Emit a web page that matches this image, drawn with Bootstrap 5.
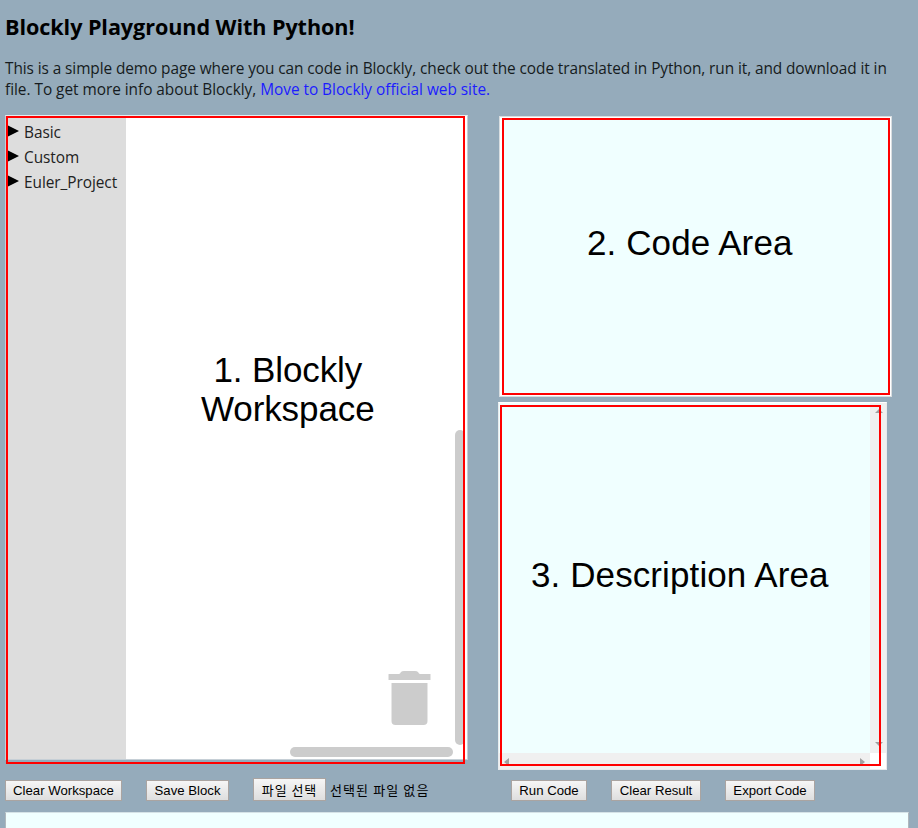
<!DOCTYPE html>
<html lang="en">
<head>
<meta charset="utf-8">
<title>Blockly Playground With Python!</title>
<link href="https://cdn.jsdelivr.net/npm/bootstrap@5.3.0/dist/css/bootstrap.min.css" rel="stylesheet">
<style>
body{background:#95abbb;color:#000;font-family:"Open Sans","Noto Sans",sans-serif;width:918px;height:828px;padding:0 5px}
.page-title{font:700 21.6px/30px "Open Sans",sans-serif;letter-spacing:-.07px;padding-top:12px;height:58px}
.intro{font-size:15.4px;line-height:21px;height:57px;letter-spacing:-.08px;color:#151b20}
.intro .second{letter-spacing:-.03px}
.intro a{color:#1c1cff}
.boards{height:655px;gap:31px}
.workspace{width:463px;height:645px;background:#fff;border:1px solid #c6cfd6;border-top-color:#e8ecef}
.toolbox{width:120px;background:#ddd;padding-top:4px;font-size:15.4px;line-height:25px;color:#222}
.toolbox li{gap:5px}
.toolbox svg{margin-bottom:3px}
.toolbox span{letter-spacing:-.05px}
.canvas-area{flex:1}
.outline{position:absolute;border:2px solid #f00;pointer-events:none}
.o-work{left:0;top:0;width:459px;height:648px}
.o-code{left:2px;top:1px;width:388px;height:277px}
.o-desc{left:1px;top:2px;width:381px;height:361px}
.caption{font:35px/39px "Liberation Sans",Arial,sans-serif;white-space:nowrap}
.c-work{position:absolute;left:195px;top:234px;letter-spacing:-.1px}
.code-box{width:393px;height:281px;margin-top:1px;background:#f0ffff;border:1px solid #d8dde0;box-shadow:inset 0 0 0 2px #fff;padding-top:106px;padding-left:87px}
.code-box .caption{letter-spacing:.1px}
.desc-box{width:389px;height:368px;margin:5px 0 0 -1px;background:#f0ffff;border:1px solid #e8ebed;border-top-color:#fff}
.desc-box .caption{padding:152px 0 0 32px;letter-spacing:.1px}
.vbar{position:absolute;right:0;top:0;width:16px;bottom:16px;background:#f0f0f0}
.hbar{position:absolute;left:0;right:16px;bottom:0;height:16px;background:#f0f0f0}
.corner{position:absolute;right:0;bottom:0;width:16px;height:16px;background:#fff}
.arrow{position:absolute;fill:#a0a0a0}
.a-up{right:3px;top:6px}
.a-down{right:3px;bottom:23px}
.a-left{left:5px;bottom:3px}
.a-right{right:21px;bottom:3px}
.vthumb,.hthumb,.trash{position:absolute;background:#ccc;border-radius:5px}
.vthumb{left:449px;top:314px;width:10px;height:315px}
.hthumb{left:284px;top:631px;width:163px;height:10px}
.trash{left:382px;top:554px;background:none;fill:#ccc}
.controls{height:42px;padding-bottom:11px}
.tool-btn{font:13.2px/16px "Liberation Sans",Arial,sans-serif;height:21px;padding:1px 0 0;border:1px solid #aaa4a1;border-radius:0;background:linear-gradient(#f6f6f6,#dedede);color:#000;white-space:nowrap}
.file-pick{font:13px/20px "Noto Sans CJK KR",sans-serif;height:23px;letter-spacing:.9px}
.file-note{font:13px/20px "Noto Sans CJK KR",sans-serif;margin:0 0 1px 4px;width:181px;white-space:nowrap;letter-spacing:1.1px}
.result{width:904px;height:16px;background:#f0ffff;border:1px solid #b0b8bd;border-bottom:0;border-top-color:#d5e2e6}
</style>
</head>
<body class="overflow-hidden">
<h1 class="page-title m-0">Blockly Playground With Python!</h1>
<p class="intro m-0 text-nowrap"><span>This is a simple demo page where you can code in Blockly, check out the code translated in Python, run it, and download it in</span><br><span class="second">file. To get more info about Blockly, <a href="#" class="text-decoration-none">Move to Blockly official web site.</a></span></p>
<main class="boards d-flex align-items-start">
 <section class="workspace position-relative d-flex flex-shrink-0">
  <ul class="toolbox list-unstyled m-0">
   <li class="d-flex align-items-center"><svg width="13" height="12"><path d="M1 0L13 6L1 12Z"/></svg><span>Basic</span></li>
   <li class="d-flex align-items-center"><svg width="13" height="12"><path d="M1 0L13 6L1 12Z"/></svg><span>Custom</span></li>
   <li class="d-flex align-items-center"><svg width="13" height="12"><path d="M1 0L13 6L1 12Z"/></svg><span>Euler_Project</span></li>
  </ul>
  <div class="canvas-area"></div>
  <div class="caption c-work text-center">1. Blockly<br>Workspace</div>
  <svg class="trash" width="44" height="56"><path d="M0.500 4H11Q12 4 13 2Q14 1 16 1H27Q29 1 30 2Q31 4 32 4H42.500V10H0.500ZM3.500 13H39.500V51Q39.500 55 35.500 55H7.500Q3.500 55 3.500 51Z"/></svg>
  <div class="vthumb"></div><div class="hthumb"></div>
  <div class="outline o-work"></div>
 </section>
 <section class="d-flex flex-column">
  <div class="code-box position-relative"><div class="caption">2. Code Area</div><div class="outline o-code"></div></div>
  <div class="desc-box position-relative"><div class="caption">3. Description Area</div>
   <div class="vbar"></div><div class="hbar"></div><div class="corner"></div>
   <svg class="arrow a-up" width="8" height="4"><path d="M0 4L4 0L8 4Z"/></svg>
   <svg class="arrow a-down" width="8" height="4"><path d="M0 0L4 4L8 0Z"/></svg>
   <svg class="arrow a-left" width="5" height="8"><path d="M5 0L0 4L5 8Z"/></svg>
   <svg class="arrow a-right" width="5" height="8"><path d="M0 0L5 4L0 8Z"/></svg>
   <div class="outline o-desc"></div></div>
 </section>
</main>
<div class="controls d-flex align-items-end">
 <button class="tool-btn" style="width:117px">Clear Workspace</button>
 <button class="tool-btn ms-4" style="width:83px">Save Block</button>
 <button class="tool-btn file-pick ms-4" style="width:73px">파일 선택</button><span class="file-note">선택된 파일 없음</span>
 <button class="tool-btn" style="width:76px">Run Code</button>
 <button class="tool-btn ms-4" style="width:90px">Clear Result</button>
 <button class="tool-btn ms-4" style="width:90px">Export Code</button>
</div>
<div class="result"></div>
<script src="https://cdn.jsdelivr.net/npm/bootstrap@5.3.0/dist/js/bootstrap.bundle.min.js"></script>
</body>
</html>
